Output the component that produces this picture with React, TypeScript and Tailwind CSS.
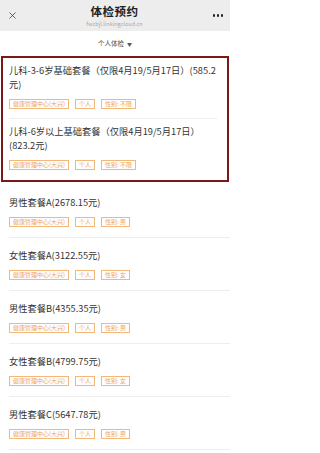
import { X } from 'lucide-react'

const font = { fontFamily: '"Noto Sans CJK SC", "Noto Sans", sans-serif' }

const boxed = [
  { title: '儿科-3-6岁基础套餐（仅限4月19/5月17日）(585.2元)', sex: '不限' },
  { title: '儿科-6岁以上基础套餐（仅限4月19/5月17日）(823.2元)', sex: '不限' },
]

const packages = [
  { title: '男性套餐A(2678.15元)', sex: '男' },
  { title: '女性套餐A(3122.55元)', sex: '女' },
  { title: '男性套餐B(4355.35元)', sex: '男' },
  { title: '女性套餐B(4799.75元)', sex: '女' },
  { title: '男性套餐C(5647.78元)', sex: '男' },
]

function Tags({ sex }: { sex: string }) {
  const tags = ['健康管理中心(大兴)', '个人', `性别: ${sex}`]
  return (
    <div className="flex gap-[6px]">
      {tags.map((t) => (
        <span
          key={t}
          className="h-[10px] px-[3px] flex items-center border border-[#f3b877] text-[#eea453] text-[6px] leading-none whitespace-nowrap"
        >
          {t}
        </span>
      ))}
    </div>
  )
}

export default function App() {
  return (
    <div className="w-[230px] h-[453px] bg-white overflow-hidden text-[#333]" style={font}>
      {/* Nav bar */}
      <header className="h-[31px] bg-[#ededed] flex items-center justify-between px-[7px]">
        <X className="w-[11px] h-[11px] text-[#333]" strokeWidth={1.6} />
        <div className="flex flex-col items-center">
          <span className="text-[11.5px] font-bold leading-[14px] tracking-[0.5px] text-[#222]">体检预约</span>
          <span className="text-[5.5px] leading-[8px] mt-[2px] text-[#aaa]">fwcbjl.linkingcloud.cn</span>
        </div>
        <div className="flex gap-[1.5px] w-[12px] justify-end">
          <span className="w-[2.5px] h-[2.5px] rounded-full bg-[#222]" />
          <span className="w-[2.5px] h-[2.5px] rounded-full bg-[#222]" />
          <span className="w-[2.5px] h-[2.5px] rounded-full bg-[#222]" />
        </div>
      </header>

      {/* Filter */}
      <div className="h-[25px] flex items-center justify-center text-[6.5px] text-[#555]">
        个人体检
        <span className="ml-[3px] text-[5px]">▼</span>
      </div>

      {/* Highlighted */}
      <div className="mx-[1px] mb-[3px] border-2 border-[#7d1818]">
        {boxed.map((p, i) => (
          <div key={p.title} className="pl-[6px]">
            <div className={`pt-[5px] mr-[10px] ${i === 0 ? 'pb-[9px] border-b border-[#eee]' : 'pb-[10px]'}`}>
              <p className="text-[9.25px] leading-[14px] mr-[-5px]">{p.title}</p>
              <div className="mt-[8px]">
                <Tags sex={p.sex} />
              </div>
            </div>
          </div>
        ))}
      </div>

      {/* List */}
      {packages.map((p) => (
        <div key={p.title} className="pl-[9px]">
          <div className="pt-[10px] pb-[10px] border-b border-[#eee]">
            <p className="text-[9.25px] leading-[14px]">{p.title}</p>
            <div className="mt-[8px]">
              <Tags sex={p.sex} />
            </div>
          </div>
        </div>
      ))}
    </div>
  )
}
